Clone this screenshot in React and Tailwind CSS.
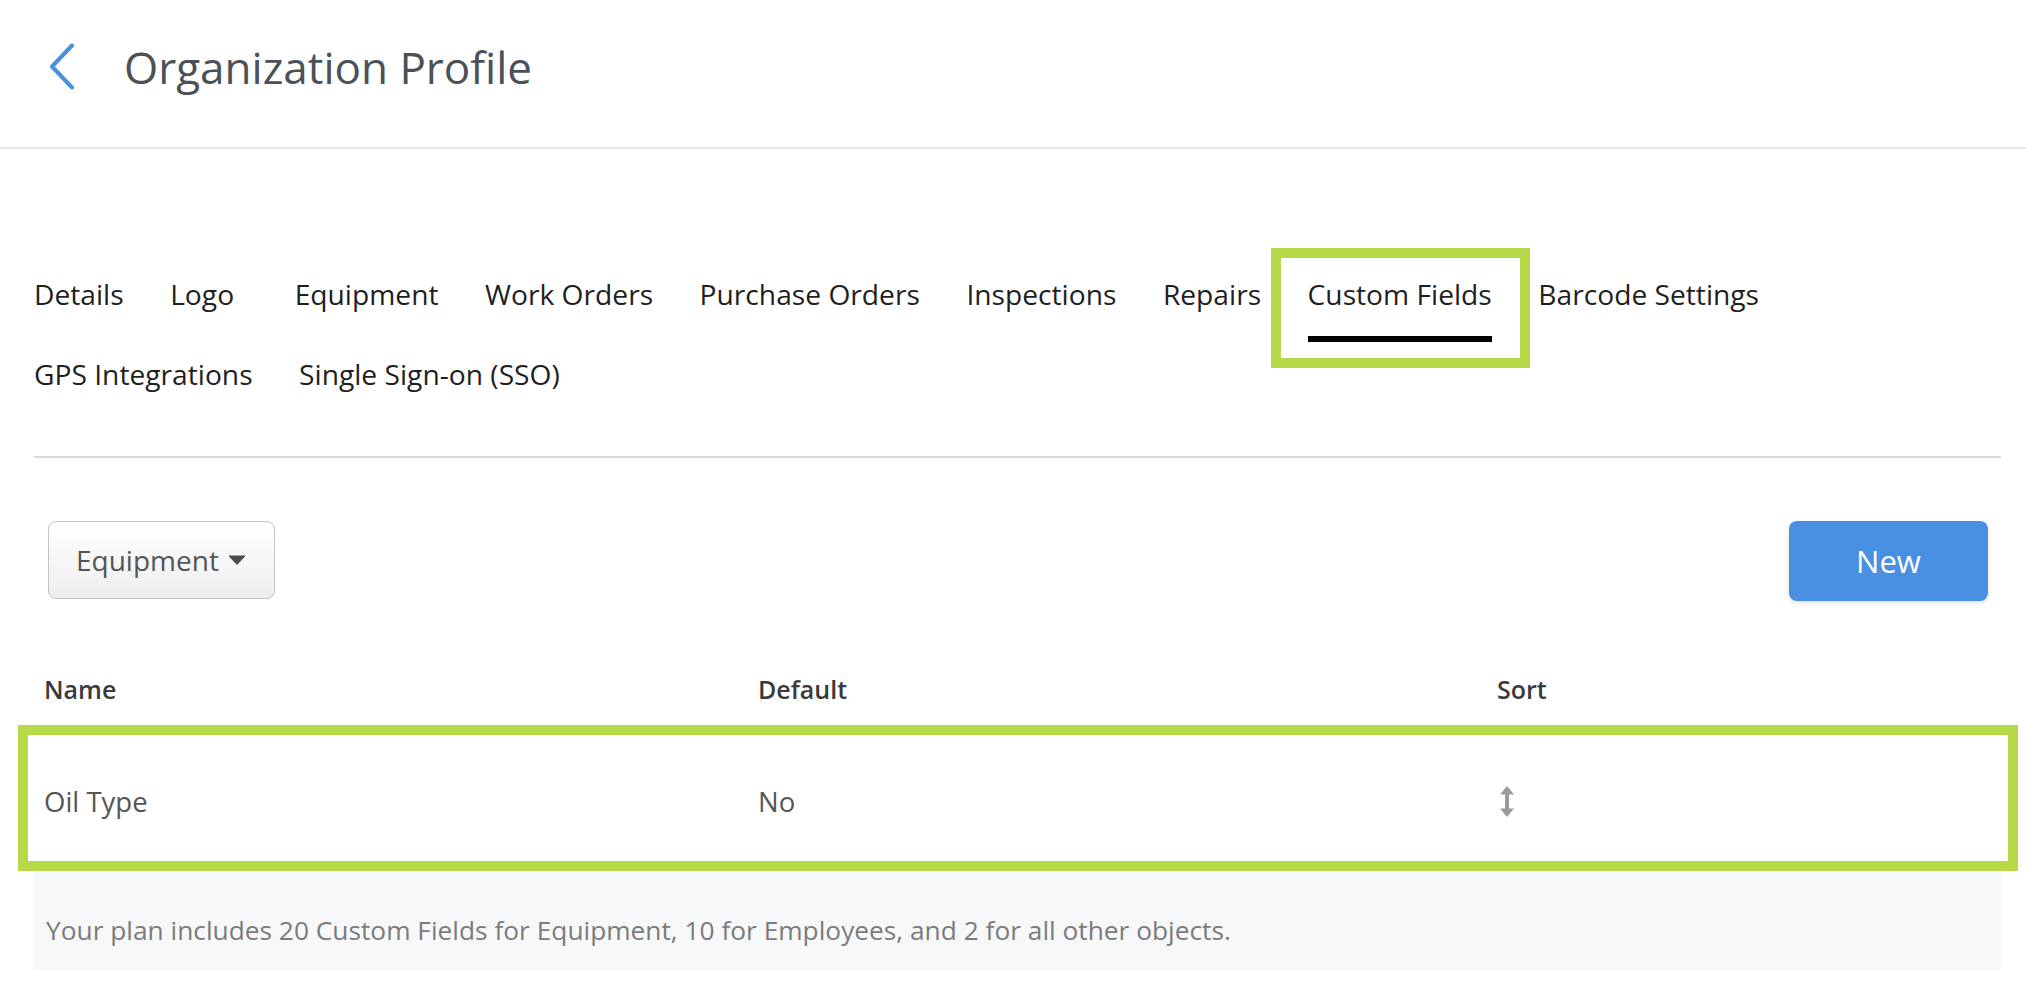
import React from 'react';

const TABS = [
  { label: 'Details' },
  { label: 'Logo', w: 'w-[78px]' },
  { label: 'Equipment' },
  { label: 'Work Orders' },
  { label: 'Purchase Orders' },
  { label: 'Inspections' },
  { label: 'Repairs' },
  { label: 'Custom Fields', active: true },
  { label: 'Barcode Settings' },
  { label: 'GPS Integrations' },
  { label: 'Single Sign-on (SSO)' },
];

const BackChevron = () => (
  <svg width="26" height="47" viewBox="0 0 26 47" fill="none">
    <polyline points="23,2.5 3,23.5 23,44.5" stroke="#4a90e2" strokeWidth="4" strokeLinecap="round" strokeLinejoin="round" />
  </svg>
);

const Caret = () => (
  <svg width="18" height="10" viewBox="0 0 18 10">
    <path d="M1 1 H17 L9 9.5 Z" fill="#4d4d4d" stroke="#4d4d4d" strokeWidth="1" strokeLinejoin="round" />
  </svg>
);

const SortIcon = () => (
  <svg width="16" height="31" viewBox="0 0 16 31">
    <path d="M8 0 L15 8.5 H10 V22.5 H15 L8 31 L1 22.5 H6 V8.5 H1 Z" fill="#9b9b9b" />
  </svg>
);

const Tab = ({ label, active, w }) => (
  <div className={`relative h-[80px] flex flex-col ${w || ''}`}>
    <span className="leading-[40px] text-[28.2px] text-[#1f1f1f] whitespace-nowrap">{label}</span>
    {active && <div className="h-[6px] bg-black mt-[22px]" />}
    {active && (
      <div className="absolute -left-[37px] -right-[38px] -top-[26px] -bottom-[14px] border-[10px] border-[#b6da47] pointer-events-none" />
    )}
  </div>
);

export default function App() {
  return (
    <div className="w-full min-h-screen bg-white font-['Open_Sans',sans-serif]">
      {/* header */}
      <div className="h-[149px] border-b-2 border-[#e8e8e8] flex items-start">
        <div className="ml-[49px] mt-[43px]"><BackChevron /></div>
        <h1 className="ml-[49px] mt-[37px] leading-[60px] text-[44px] text-[#4b5157] font-normal">Organization Profile</h1>
      </div>

      <div className="ml-[34px] w-[1967px]">
        {/* tabs */}
        <div className="mt-[125px] flex flex-wrap gap-x-[46.5px]">
          {TABS.map((t) => <Tab key={t.label} {...t} />)}
        </div>
        <div className="mt-[22px] h-[2px] bg-[#d9d9d9]" />

        {/* toolbar */}
        <div className="mt-[63px] flex justify-between items-start">
          <button type="button" className="ml-[14px] w-[227px] h-[78px] rounded-[8px] border border-[#c4c4c4] bg-linear-to-b from-white to-[#eeeeee] flex items-center pl-[27px] gap-[9px]">
            <span className="text-[28px] text-[#555]">Equipment</span>
            <Caret />
          </button>
          <button type="button" className="mr-[13px] w-[199px] h-[80px] rounded-[8px] bg-[#4a90e2] text-white text-[31px] font-medium shadow-[0_2px_4px_rgba(0,0,0,0.12)]">
            New
          </button>
        </div>

        {/* table */}
        <div className="mt-[53px] h-[71px] grid grid-cols-[713px_739px_1fr] leading-[71px] text-[25px] font-semibold text-[#3a3a3a]">
          <div className="pl-[10px]">Name</div>
          <div className="pl-[11px]">Default</div>
          <div className="pl-[11px]">Sort</div>
        </div>
        <div className="relative h-[146px] pt-[7px] grid grid-cols-[713px_739px_1fr] items-center text-[27.5px] text-[#555]">
          <div className="pl-[10px]">Oil Type</div>
          <div className="pl-[11px]">No</div>
          <div className="pl-[13px] flex items-center"><SortIcon /></div>
          <div className="absolute -left-[16px] -right-[17px] inset-y-0 border-[10px] border-[#b6da47] pointer-events-none" />
        </div>
        <div className="h-[99px] bg-[#f7f8fa] pt-[42px] pl-[12px] leading-[34px] text-[26.3px] text-[#7b7b7b]">
          Your plan includes 20 Custom Fields for Equipment, 10 for Employees, and 2 for all other objects.
        </div>
      </div>
    </div>
  );
}
